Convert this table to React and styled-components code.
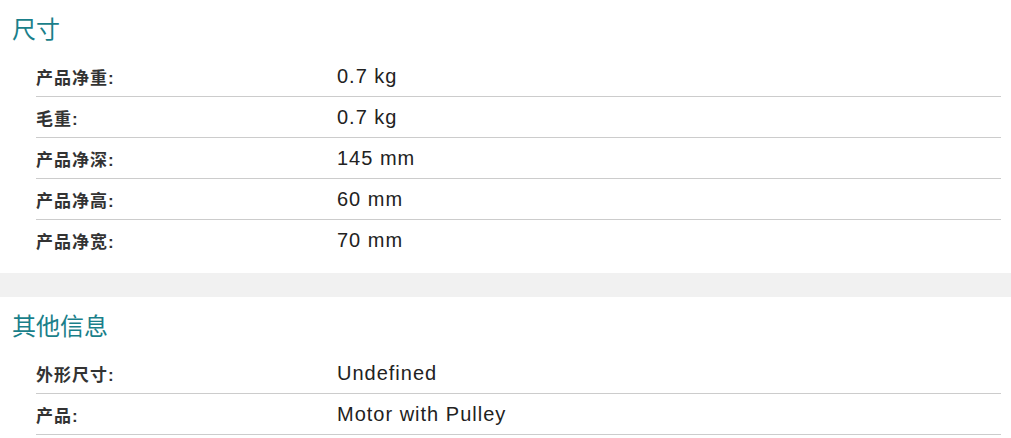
import React from 'react';
import styled, { createGlobalStyle } from 'styled-components';

const teal = '#1a7f8a';
const ink = '#222222';
const rule = '#cccccc';
const band = '#f1f1f1';

const GlobalStyle = createGlobalStyle`
  html, body {
    margin: 0;
    padding: 0;
    background: #ffffff;
  }
  body {
    font-family: 'Liberation Sans', 'Noto Sans CJK SC', sans-serif;
    color: ${ink};
  }
`;

const Page = styled.div`
  width: 100%;
  display: flex;
  flex-direction: column;
`;

const Section = styled.section`
  padding: 15px 10px 12px 12px;
`;

const SectionTitle = styled.h2`
  margin: 0 0 12px;
  font-size: 24px;
  line-height: 29px;
  font-weight: 400;
  color: ${teal};
  font-family: 'Liberation Sans', 'Noto Sans CJK SC', sans-serif;
`;

const SpecList = styled.dl`
  margin: 0 0 0 24px;
  display: flex;
  flex-direction: column;
`;

const SpecRow = styled.div`
  display: grid;
  grid-template-columns: 301px 1fr;
  align-items: center;
  height: 40px;
  border-bottom: 1px solid ${props => (props.$divider ? rule : 'transparent')};
`;

const Label = styled.dt`
  margin: 0;
  font-size: 17px;
  font-weight: 700;
  letter-spacing: 1px;
  color: #333333;
`;

const Value = styled.dd`
  margin: 0;
  font-size: 20px;
  letter-spacing: 1px;
  color: ${ink};
`;

const Spacer = styled.div`
  height: 24px;
  background: ${band};
`;

const dimensions = [
  ['产品净重:', '0.7 kg'],
  ['毛重:', '0.7 kg'],
  ['产品净深:', '145 mm'],
  ['产品净高:', '60 mm'],
  ['产品净宽:', '70 mm'],
];

const other = [
  ['外形尺寸:', 'Undefined'],
  ['产品:', 'Motor with Pulley'],
];

function SpecSection({ title, rows, openEnded }) {
  return (
    <Section>
      <SectionTitle>{title}</SectionTitle>
      <SpecList>
        {rows.map(([label, value], i) => (
          <SpecRow key={label} $divider={openEnded || i < rows.length - 1}>
            <Label>{label}</Label>
            <Value>{value}</Value>
          </SpecRow>
        ))}
      </SpecList>
    </Section>
  );
}

export default function App() {
  return (
    <Page>
      <GlobalStyle />
      <SpecSection title="尺寸" rows={dimensions} />
      <Spacer />
      <SpecSection title="其他信息" rows={other} openEnded />
    </Page>
  );
}
